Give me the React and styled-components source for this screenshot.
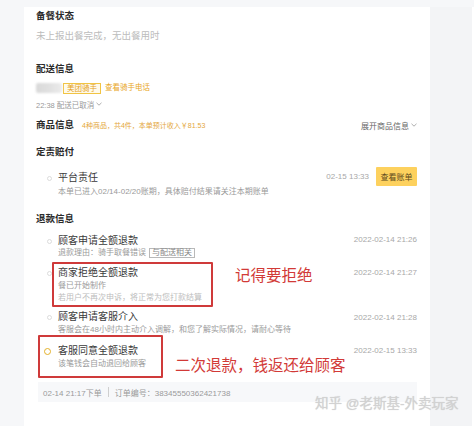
import React from 'react';
import styled, { createGlobalStyle } from 'styled-components';

const GlobalStyle = createGlobalStyle`
  html, body {
    margin: 0;
    padding: 0;
    background: #f6f7f9;
  }
  body {
    font-family: "Liberation Sans", "Noto Sans CJK SC", sans-serif;
  }
  * { box-sizing: border-box; }
`;

const Page = styled.div`
  position: relative;
  display: flex;
  width: 474px;
  height: 426px;
  padding-top: 7px;
  background: #f6f7f9;
  overflow: hidden;
`;

const Gutter = styled.div`
  width: 24px;
  flex-shrink: 0;
`;

const Card = styled.main`
  width: 406px;
  flex-shrink: 0;
  background: #fff;
  padding: 1px 13px 0 12px;
  display: flex;
  flex-direction: column;
`;

const Side = styled.aside`
  width: 42px;
  flex-shrink: 0;
  background: #f3f4f6;
`;

const Edge = styled.div`
  flex: 1;
  background: #fff;
`;

const Heading = styled.h3`
  margin: ${p => p.$mt || 0}px 0 0;
  font-size: 9.5px;
  line-height: 16px;
  font-weight: 700;
  color: #2a2a2a;
  white-space: nowrap;
`;

const Muted = styled.p`
  margin: ${p => p.$mt || 0}px 0 0;
  font-size: 9.5px;
  line-height: 14px;
  color: #bcbcbc;
`;

const RiderRow = styled.div`
  display: flex;
  align-items: center;
  height: 14px;
  margin-top: 4px;
`;

const Avatar = styled.div`
  width: 26px;
  height: 10px;
  margin-right: 1px;
  border-radius: 2px;
  background: linear-gradient(90deg, #d9d9d9 0%, #e2e2e2 60%, #ececec 100%);
  filter: blur(0.8px);
`;

const RiderTag = styled.span`
  height: 11px;
  padding: 0 3px;
  border: 1px solid #f1c443;
  background: #fffaea;
  color: #e3a11c;
  font-size: 7.5px;
  line-height: 9px;
`;

const Link = styled.span`
  margin-left: 4px;
  color: #e8a626;
  font-size: 7.5px;
  line-height: 14px;
`;

const Status = styled.div`
  display: flex;
  align-items: center;
  gap: 2px;
  margin-top: 3px;
  height: 12px;
  font-size: 7.5px;
  color: #999;
`;

const GoodsRow = styled.div`
  display: flex;
  align-items: center;
  height: 16px;
  margin-top: 7px;
`;

const Summary = styled.span`
  margin-left: 8px;
  font-size: 7px;
  color: #e4a73c;
  white-space: nowrap;
`;

const Expand = styled.span`
  margin-left: auto;
  display: flex;
  align-items: center;
  gap: 2px;
  font-size: 8px;
  color: #666;
`;

const Item = styled.div`
  display: flex;
  align-items: flex-start;
  margin-top: ${p => p.$mt || 0}px;
`;

const Marker = styled.div`
  width: ${p => p.$w || 22}px;
  height: 14px;
  margin-top: ${p => p.$mt || 0}px;
  flex-shrink: 0;
  display: flex;
  align-items: center;
  justify-content: ${p => (p.$start ? 'flex-start' : 'flex-end')};
  padding: ${p => (p.$start ? '0 0 0 4px' : '0 6px 0 0')};
`;

const Dot = styled.span`
  width: ${p => (p.$active ? 7 : 5)}px;
  height: ${p => (p.$active ? 7 : 5)}px;
  border-radius: 50%;
  border: ${p => (p.$active ? '1.5px solid #e3b12a' : '1px solid #dcdcdc')};
  background: #fff;
`;

const Body = styled.div`
  display: flex;
  flex-direction: column;
  white-space: nowrap;
`;

const Highlight = styled.div`
  display: flex;
  flex-shrink: 0;
  width: ${p => p.$w}px;
  margin-left: ${p => p.$ml}px;
  padding: ${p => p.$pad};
  border: 2px solid #cf3a3a;
  border-radius: 1px;
`;

const Title = styled.div`
  font-size: 10px;
  line-height: 14px;
  color: #3a3a3a;
`;

const Desc = styled.div`
  font-size: 8px;
  line-height: ${p => p.$lh || 12}px;
  color: ${p => (p.$light ? '#bdbdbd' : '#9a9a9a')};
  display: flex;
  align-items: center;
`;

const SmallTag = styled.span`
  margin-left: 3px;
  padding: 0 2px;
  border: 1px solid #b9b9b9;
  color: #888;
  font-size: 8px;
  line-height: 8px;
`;

const Note = styled.span`
  margin-left: ${p => p.$ml}px;
  margin-top: ${p => p.$mt}px;
  font-size: 15.5px;
  line-height: 20px;
  color: #d23a37;
  white-space: nowrap;
`;

const Time = styled.span`
  margin-left: auto;
  margin-top: ${p => p.$mt || 0}px;
  font-size: 8px;
  line-height: 12px;
  color: #a8a8a8;
  white-space: nowrap;
`;

const Actions = styled.div`
  margin-left: auto;
  margin-top: -4px;
  height: 19px;
  display: flex;
  align-items: center;
  gap: 7px;
`;

const BillButton = styled.button`
  width: 41px;
  height: 19px;
  padding: 0;
  border: none;
  border-radius: 1px;
  background: #fdd15e;
  color: #5e4a1c;
  font-family: inherit;
  font-size: 8px;
`;

const Footer = styled.div`
  margin: 4px 0 0 2px;
  width: 379px;
  height: 20px;
  padding-left: 5px;
  background: #f7f8fa;
  display: flex;
  align-items: center;
  gap: 6px;
  font-size: 8px;
  color: #9a9a9a;
  white-space: nowrap;
`;

const Divider = styled.span`
  width: 1px;
  height: 10px;
  background: #cfcfcf;
`;

const Watermark = styled.div`
  position: absolute;
  left: 315px;
  top: 395px;
  font-size: 13.5px;
  line-height: 17px;
  color: #d2d2d2;
  text-shadow: 0 0 1px rgba(0, 0, 0, 0.18);
  white-space: nowrap;
`;

function Chevron() {
  return (
    <svg width="6" height="4" viewBox="0 0 6 4">
      <polyline points="0.5,0.8 3,3.2 5.5,0.8" fill="none" stroke="#999" strokeWidth="0.8" />
    </svg>
  );
}

export default function App() {
  return (
    <>
      <GlobalStyle />
      <Page>
        <Gutter />
        <Card>
          <Heading>备餐状态</Heading>
          <Muted $mt={5}>未上报出餐完成，无出餐用时</Muted>

          <Heading $mt={18}>配送信息</Heading>
          <RiderRow>
            <Avatar />
            <RiderTag>美团骑手</RiderTag>
            <Link>查看骑手电话</Link>
          </RiderRow>
          <Status>22:38 配送已取消 <Chevron /></Status>

          <GoodsRow>
            <Heading>商品信息</Heading>
            <Summary>4种商品，共4件，本单预计收入￥81.53</Summary>
            <Expand>展开商品信息 <Chevron /></Expand>
          </GoodsRow>

          <Heading $mt={11}>定责赔付</Heading>
          <Item $mt={11}>
            <Marker><Dot /></Marker>
            <Body>
              <Title>平台责任</Title>
              <Desc style={{ marginTop: 1 }}>本单已进入02/14-02/20账期，具体赔付结果请关注本期账单</Desc>
            </Body>
            <Actions>
              <Time>02-15 13:33</Time>
              <BillButton>查看账单</BillButton>
            </Actions>
          </Item>

          <Heading $mt={13}>退款信息</Heading>
          <Item $mt={7}>
            <Marker><Dot /></Marker>
            <Body>
              <Title>顾客申请全额退款</Title>
              <Desc $lh={10}>退款理由：骑手取餐错误<SmallTag>与配送相关</SmallTag></Desc>
            </Body>
            <Time>2022-02-14 21:26</Time>
          </Item>

          <Item $mt={4}>
            <Marker $mt={4}><Dot /></Marker>
            <Highlight $w={161} $ml={-6} $pad="2px 4px 1px">
              <Body>
                <Title>商家拒绝全额退款</Title>
                <Desc>餐已开始制作</Desc>
                <Desc $light>若用户不再次申诉，将正常为您打款结算</Desc>
              </Body>
            </Highlight>
            <Note $ml={22} $mt={3.5}>记得要拒绝</Note>
            <Time $mt={5}>2022-02-14 21:27</Time>
          </Item>

          <Item $mt={3}>
            <Marker><Dot /></Marker>
            <Body>
              <Title>顾客申请客服介入</Title>
              <Desc $lh={11}>客服会在48小时内主动介入调解，和您了解实际情况，请耐心等待</Desc>
            </Body>
            <Time $mt={1.5}>2022-02-14 21:28</Time>
          </Item>

          <Item>
            <Highlight $w={125} $ml={2} $pad="7px 0 6px">
              <Marker $w={18} $start><Dot $active /></Marker>
              <Body>
                <Title>客服同意全额退款</Title>
                <Desc>该笔钱会自动退回给顾客</Desc>
              </Body>
            </Highlight>
            <Note $ml={12} $mt={21}>二次退款，钱返还给顾客</Note>
            <Time $mt={10}>2022-02-15 13:33</Time>
          </Item>

          <Footer>
            <span>02-14 21:17下单</span>
            <Divider />
            <span>订单编号：38345550362421738</span>
          </Footer>
        </Card>
        <Side />
        <Edge />
        <Watermark>知乎 @老斯基-外卖玩家</Watermark>
      </Page>
    </>
  );
}
